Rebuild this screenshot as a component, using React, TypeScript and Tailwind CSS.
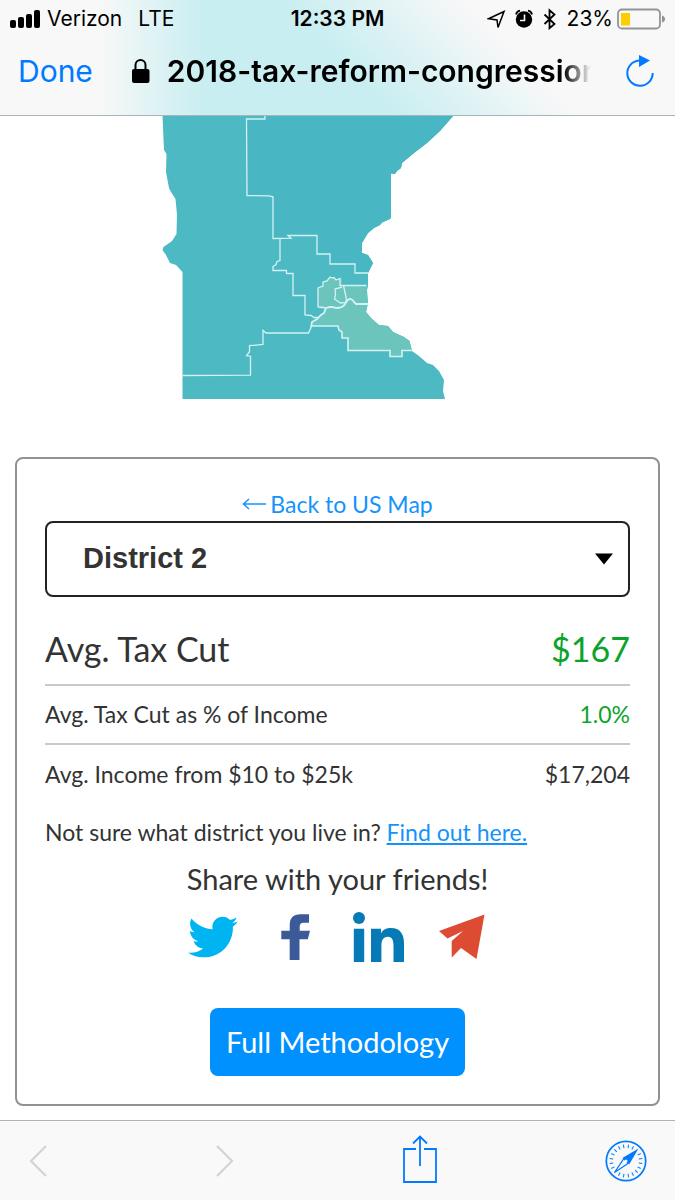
import { useState } from "react";
import type { ReactNode } from "react";
import { FaTwitter } from "react-icons/fa";

function SignalIcon() {
  return (
    <svg width="31" height="18" viewBox="0 0 31 18" fill="#000" aria-hidden="true">
      <rect x="0" y="10" width="6" height="8" rx="2" />
      <rect x="8" y="7" width="6" height="11" rx="2" />
      <rect x="16" y="4" width="6" height="14" rx="2" />
      <rect x="24" y="0" width="6" height="18" rx="2" />
    </svg>
  );
}

function StatusIcons() {
  return (
    <svg width="72" height="22" viewBox="0 0 72 22" aria-hidden="true">
      <path d="M1.500 10.700 17 3.500 11 19.500 10 12Z" fill="none" stroke="#000" strokeWidth="1.500" strokeLinejoin="miter" />
      <circle cx="37" cy="11.500" r="8.200" fill="#000" />
      <path d="M37.500 6.500v6h-4.500" fill="none" stroke="#f4fbfc" strokeWidth="1.600" />
      <path d="M29 6.500a5 5 0 0 1 4-3.800M41 2.700a5 5 0 0 1 4 3.800" fill="none" stroke="#000" strokeWidth="1.800" />
      <path d="m57.500 6.500 10 9.500-5 4.200V2.300l5 4.200-10 9.500" fill="none" stroke="#000" strokeWidth="1.800" />
    </svg>
  );
}

function BatteryIcon() {
  return (
    <svg width="48" height="22" viewBox="0 0 48 22" aria-hidden="true">
      <rect x="1" y="1.500" width="42" height="19" rx="4" fill="none" stroke="#919496" strokeWidth="1.800" />
      <rect x="4" y="5" width="9" height="12.500" fill="#fc0" />
      <path d="M45 7.500q3 1 3 3.500t-3 3.500Z" fill="#919496" />
    </svg>
  );
}

function LockIcon() {
  return (
    <svg width="20" height="26" viewBox="0 0 20 26" className="shrink-0" aria-hidden="true">
      <path d="M4.500 12V7a5 5 0 0 1 10 0v5" fill="none" stroke="#000" strokeWidth="2" />
      <rect x="1" y="11" width="17.500" height="14" rx="2" fill="#000" />
    </svg>
  );
}

function ReloadIcon() {
  return (
    <svg width="30" height="34" viewBox="0 0 30 34" aria-hidden="true">
      <path d="M14 6.500A12.700 12.700 0 1 0 27.700 19" fill="none" stroke="#007aff" strokeWidth="2" />
      <path d="M14 1v12l11-6.500Z" fill="#007aff" />
    </svg>
  );
}

function DistrictMap() {
  return (
    <svg viewBox="0 116 675 284" className="block w-full" role="img" aria-label="Minnesota congressional districts">
      <path
        d="M162.500 115L164 150 166.500 154 166 172 169 188 171 192 175.500 199 177 215 176.500 234 172 241 163.500 247 162.500 250 166 255 170 263 176 265 182.500 272V399H445L443 391 444 380 439 371 433 365 427 363 419 356 412 351 409.500 341 404 337 393 332 388 326 379 325 372 319 366 312 368 303 367 290 368 286V273L373 263 368 255 362 253V243L368 233 374 228 380 225 382 222.500 390 219 391 217V173.500L395 174 397 171 401 168 402 163 414 153 427 143 440 131 454 115Z"
        fill="#4cb9c3"
      />
      <path
        d="M265 115V119H246.500L247 195.500 272.500 196.500 273 238.500 291 238 288 235.300H317V254H330V264H355V273H368L373 263 368 255 362 253V243L368 233 374 228 380 225 382 222.500 390 219 391 217V173.500L395 174 397 171 401 168 402 163 414 153 427 143 440 131 454 115Z"
        fill="#48b6c3"
      />
      <path
        d="M318 308V288L323 286 324 282 330 277 334 279 338 280 342 279V286H368L366.500 290 368 303 366 312 372 319 379 325 388 326 393 332 404 337 409.500 341 412 351H402V356.500H390V351H348V338.500H342L341 331 338 326H311.500L312.500 322 322 316 325 310Z"
        fill="#6bc5bd"
      />
      <g fill="none" stroke="#d4f2f4" strokeWidth="1.300">
        <path d="M265 115v4h-18.500l.5 76.500 22 .3 4 1v41.700l18-.3-3-2.700h29v18.500h13v10h25v9h13" />
        <path d="M280 238.500v22l-3 1-1 3-3 2v4h13.500v3h6.500v22h12v19.500l6 .5 3 2h4" />
        <path d="M326 309l-2-1.500-6-.5v-19l5-2v-4l4-1 3-4 2 1 2-.5 2 2.500 4-1.500v7h26.500M342 287l-7 2 .5 6-1 4 6 4 5-.5 1-3-3-14" />
        <path d="m182.500 375.500 68-.3v-19l-4-.5 3-4v-6l13.500-1.200v-14l3 2.500h42.500l3-6.500" />
        <path d="M311.500 326H338l1 4 3 2v6h6v12.500h42v6h12v-6h10" strokeWidth="1.600" />
        <path d="M311 327l1-5 5-3 4-4 3-2 2-5q5-2 10 0 7 0 9-4 5-9 9-2l2 2h12" strokeWidth="1.800" />
      </g>
    </svg>
  );
}

function FacebookIcon() {
  return (
    <svg width="30" height="46" viewBox="0 0 30 46" fill="#3d5a98" aria-hidden="true">
      <path d="M8.700 46V25.300H.3v-8.600h8.400V11Q8.700.3 19.500.3H28v8.400h-5.500q-3.800 0-3.800 4v4H29l-2.200 8.600h-8.300V46Z" />
    </svg>
  );
}

function LinkedInIcon() {
  return (
    <svg width="52" height="50" viewBox="0 0 52 50" fill="#0679b7" aria-hidden="true">
      <circle cx="6" cy="6" r="6" />
      <path d="M.8 16.700h10.400V50H.8ZM18 50V16.700h10v4.500c2-4 6-5.300 10-5.300 9 0 13 6 13 15V50H40.500V34c0-5-1-9.200-5.700-9.200S28.400 28.500 28.400 33.500V50Z" />
    </svg>
  );
}

function PlaneIcon() {
  return (
    <svg width="46" height="46" viewBox="0 0 46 46" fill="#dd4b33" aria-hidden="true">
      <path d="M0 17 45.500.5 37.500 45 22 34 12.700 43.500V27L24 17 8.500 24.500Z" />
    </svg>
  );
}

function CompassIcon() {
  const ticks = Array.from({ length: 20 }, (_, i) => i * 18 + 9).filter((a) => a !== 45 && a !== 225);
  return (
    <svg width="42" height="42" viewBox="0 0 42 42" aria-hidden="true">
      <circle cx="21" cy="21" r="19.700" fill="none" stroke="#007aff" strokeWidth="1.700" />
      {ticks.map((a) => (
        <path key={a} d="M21 4.500v3.500" stroke="#007aff" strokeWidth="1" transform={`rotate(${a} 21 21)`} />
      ))}
      <path d="M33.500 8.500 24.300 24.300 17.700 17.700Z" fill="#007aff" />
      <path d="M23.300 23.300 9.500 32.500 18.700 18.700Z" fill="#f9f9f9" stroke="#007aff" strokeWidth="1.300" />
      <circle cx="21" cy="21" r="1.500" fill="#f9f9f9" />
    </svg>
  );
}

function ShareLink({ label, children }: { label: string; children: ReactNode }) {
  return (
    <a href="#share" aria-label={label} className="flex h-full w-full items-center justify-center">
      {children}
    </a>
  );
}

function BrowserHeader() {
  return (
    <header className="border-b border-[#a9b4b6] bg-[#f8f8f8] bg-[linear-gradient(to_right,#f8f8f8_100px,transparent_205px),linear-gradient(45deg,#c8eef1_50%,#f8f8f8_73%)] font-['Inter',sans-serif] text-black">
      <div className="grid h-[38px] grid-cols-[1fr_auto_1fr] items-center pr-[10px] pl-[10px] text-[21px]">
        <div className="flex items-center">
          <SignalIcon />
          <span className="ml-[6px]">Verizon</span>
          <span className="ml-4">LTE</span>
        </div>
        <span className="font-semibold">12:33 PM</span>
        <div className="flex items-center justify-end">
          <StatusIcons />
          <span className="mr-1 ml-2">23%</span>
          <BatteryIcon />
        </div>
      </div>
      <div className="flex h-[77px] items-start pr-5 pl-[18px]">
        <button type="button" className="h-[66px] text-[30px] text-[#007aff]">
          Done
        </button>
        <div className="ml-[38px] flex h-[66px] min-w-0 flex-1 items-center">
          <LockIcon />
          <span className="ml-4 min-w-0 flex-1 overflow-hidden text-[30px] font-semibold whitespace-nowrap [mask-image:linear-gradient(to_right,#000_calc(100%-28px),transparent)]">
            2018-tax-reform-congression
          </span>
        </div>
        <button type="button" aria-label="Reload" className="ml-[34px] flex h-[66px] items-center">
          <ReloadIcon />
        </button>
      </div>
    </header>
  );
}

function DistrictCard() {
  const [district, setDistrict] = useState("District 2");
  return (
    <section className="mx-[15px] mt-[57px] mb-[14px] rounded-lg border-2 border-[#929292] px-7 py-7 text-[23px] text-[#333]">
      <div className="flex h-[34px] items-center justify-center">
        <a href="#us-map" className="flex items-center gap-1 text-[#1593fb]">
          <svg width="24" height="14" viewBox="0 0 24 14" fill="none" stroke="currentColor" strokeWidth="1.500" aria-hidden="true">
            <path d="M24 7H1M7 2 1.500 7 7 12" />
          </svg>
          Back to US Map
        </a>
      </div>
      <div className="relative">
        <select
          aria-label="District"
          value={district}
          onChange={(e) => setDistrict(e.target.value)}
          className="block h-[76px] w-full appearance-none rounded-lg border-2 border-[#222] bg-white px-9 font-['Liberation_Sans',sans-serif] text-[29px] font-bold text-[#333]"
        >
          <option>District 1</option>
          <option>District 2</option>
          <option>District 3</option>
          <option>District 4</option>
          <option>District 5</option>
          <option>District 6</option>
          <option>District 7</option>
          <option>District 8</option>
        </select>
        <svg width="20" height="12" viewBox="0 0 20 12" className="pointer-events-none absolute top-8 right-4" aria-hidden="true">
          <path d="M1 .5h18L10 11.500Z" fill="#000" />
        </svg>
      </div>
      <table className="mt-4 w-full">
        <tbody>
          <tr className="h-[72px] border-b-2 border-[#c9c9c9] text-[34px]">
            <th scope="row" className="p-0 text-left font-normal">Avg. Tax Cut</th>
            <td className="p-0 text-right text-[#0ca32b]">$167</td>
          </tr>
          <tr className="h-[59px] border-b-2 border-[#c9c9c9]">
            <th scope="row" className="p-0 text-left font-normal">Avg. Tax Cut as % of Income</th>
            <td className="p-0 text-right text-[#0ca32b]">1.0%</td>
          </tr>
          <tr className="h-[60px]">
            <th scope="row" className="p-0 text-left font-normal">Avg. Income from $10 to $25k</th>
            <td className="p-0 text-right">$17,204</td>
          </tr>
        </tbody>
      </table>
      <p className="leading-[56px]">
        Not sure what district you live in?{" "}
        <a href="#find" className="text-[#1593fb] underline">
          Find out here.
        </a>
      </p>
      <h2 className="text-center text-[29px] leading-[38px]">Share with your friends!</h2>
      <div className="mx-auto grid h-[78px] max-w-[332px] grid-cols-4">
        <ShareLink label="Twitter">
          <FaTwitter size={50} color="#00b4f1" />
        </ShareLink>
        <ShareLink label="Facebook">
          <FacebookIcon />
        </ShareLink>
        <ShareLink label="LinkedIn">
          <LinkedInIcon />
        </ShareLink>
        <ShareLink label="Email">
          <PlaneIcon />
        </ShareLink>
      </div>
      <div className="mt-8 flex justify-center">
        <button type="button" className="h-[68px] rounded-lg bg-[#0091ff] px-4 text-[29px] text-white">
          Full Methodology
        </button>
      </div>
    </section>
  );
}

function BrowserToolbar() {
  return (
    <footer className="flex h-20 items-center justify-between border-t border-[#b2b2b2] bg-[#f9f9f9] px-7">
      <button type="button" aria-label="Back">
        <svg width="20" height="34" viewBox="0 0 20 34" fill="none" stroke="#d3d3d5" strokeWidth="2.200">
          <path d="M18 2 3 17l15 15" />
        </svg>
      </button>
      <button type="button" aria-label="Forward">
        <svg width="20" height="34" viewBox="0 0 20 34" fill="none" stroke="#d3d3d5" strokeWidth="2.200">
          <path d="m2 2 15 15L2 32" />
        </svg>
      </button>
      <button type="button" aria-label="Share">
        <svg width="36" height="52" viewBox="0 2 36 52" fill="none" stroke="#007aff" strokeWidth="1.800">
          <path d="M14 16H2v33h32V16H22M18 33V3M11 10.500 18 3.500l7 7" />
        </svg>
      </button>
      <button type="button" aria-label="Open in Safari">
        <CompassIcon />
      </button>
    </footer>
  );
}

export default function App() {
  return (
    <div className="flex min-h-screen flex-col bg-white font-['Lato',sans-serif]">
      <BrowserHeader />
      <main className="flex-1">
        <DistrictMap />
        <DistrictCard />
      </main>
      <BrowserToolbar />
    </div>
  );
}
